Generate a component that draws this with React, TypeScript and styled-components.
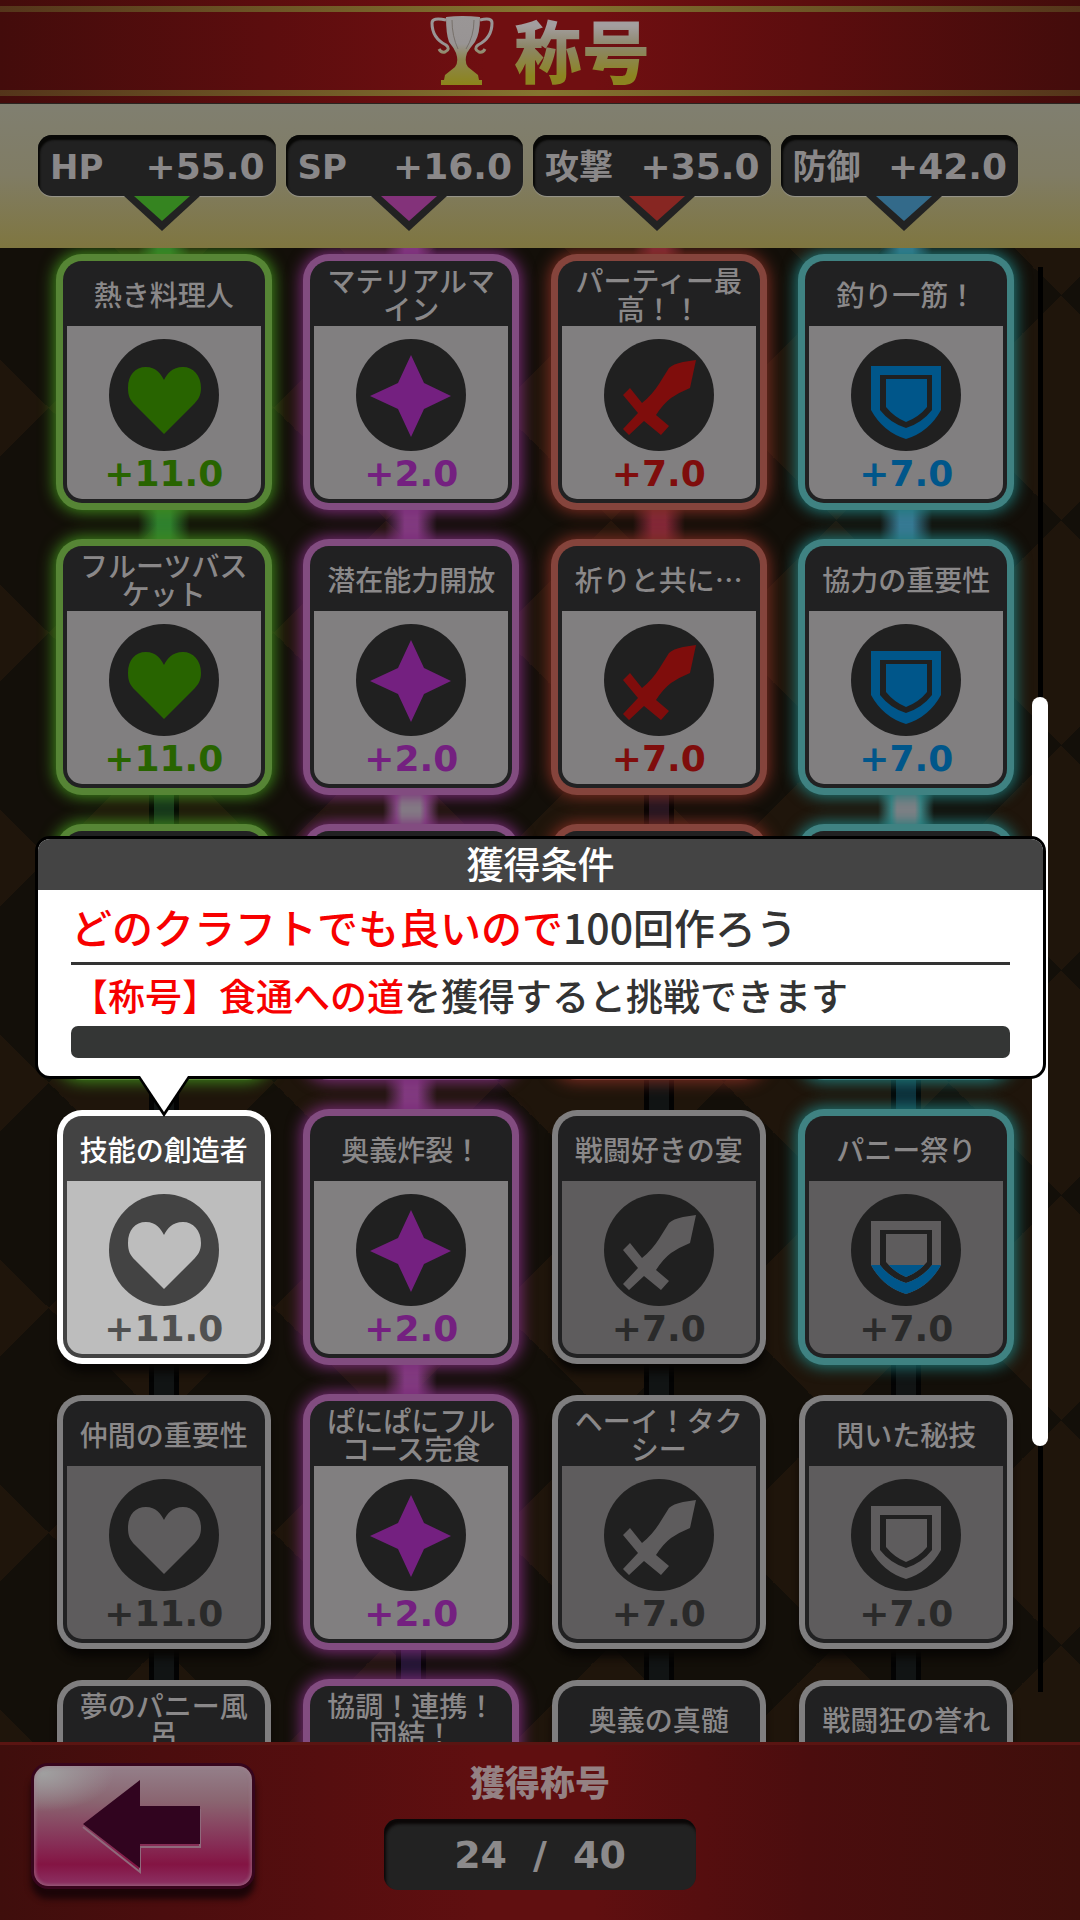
import React from "react";
import styled, { createGlobalStyle, css } from "styled-components";

type Stat = "hp" | "sp" | "attack" | "defense";
type LinkState = "lit" | "white" | "tinted" | "off";
type CardState = "open" | "progress" | "locked" | "selected";

const palette: Record<Stat, { ring: string; glow: string; icon: string; arrow: string; link: string; tint: string }> = {
  hp: { ring: "#568535", glow: "#3f8a1c", icon: "#286400", arrow: "#358420", link: "#2f8030", tint: "#15321c" },
  sp: { ring: "#824c80", glow: "#7c2c7a", icon: "#742080", arrow: "#83327a", link: "#823c80", tint: "#1f1530" },
  attack: { ring: "#85443c", glow: "#7c2c22", icon: "#7f0d0c", arrow: "#872622", link: "#84283a", tint: "#231622" },
  defense: { ring: "#3f8282", glow: "#1f7a7a", icon: "#00568a", arrow: "#336a8a", link: "#3a7a96", tint: "#0d2d38" },
};

interface TitleCard {
  name: string;
  state: CardState;
  link: LinkState;
}

interface StatColumn {
  stat: Stat;
  label: string;
  total: string;
  bonus: string;
  cards: TitleCard[];
}

const columns: StatColumn[] = [
  {
    stat: "hp",
    label: "HP",
    total: "+55.0",
    bonus: "+11.0",
    cards: [
      { name: "熱き料理人", state: "open", link: "lit" },
      { name: "フルーツバスケット", state: "open", link: "tinted" },
      { name: "", state: "open", link: "off" },
      { name: "技能の創造者", state: "selected", link: "off" },
      { name: "仲間の重要性", state: "locked", link: "off" },
      { name: "夢のパニー風呂", state: "locked", link: "off" },
    ],
  },
  {
    stat: "sp",
    label: "SP",
    total: "+16.0",
    bonus: "+2.0",
    cards: [
      { name: "マテリアルマイン", state: "open", link: "lit" },
      { name: "潜在能力開放", state: "open", link: "white" },
      { name: "", state: "open", link: "lit" },
      { name: "奥義炸裂！", state: "open", link: "lit" },
      { name: "ぱにぱにフルコース完食", state: "open", link: "tinted" },
      { name: "協調！連携！団結！", state: "open", link: "off" },
    ],
  },
  {
    stat: "attack",
    label: "攻撃",
    total: "+35.0",
    bonus: "+7.0",
    cards: [
      { name: "パーティー最高！！", state: "open", link: "lit" },
      { name: "祈りと共に…", state: "open", link: "tinted" },
      { name: "", state: "open", link: "off" },
      { name: "戦闘好きの宴", state: "locked", link: "off" },
      { name: "ヘーイ！タクシー", state: "locked", link: "off" },
      { name: "奥義の真髄", state: "locked", link: "off" },
    ],
  },
  {
    stat: "defense",
    label: "防御",
    total: "+42.0",
    bonus: "+7.0",
    cards: [
      { name: "釣り一筋！", state: "open", link: "lit" },
      { name: "協力の重要性", state: "open", link: "white" },
      { name: "", state: "open", link: "tinted" },
      { name: "パニー祭り", state: "progress", link: "off" },
      { name: "閃いた秘技", state: "locked", link: "off" },
      { name: "戦闘狂の誉れ", state: "locked", link: "off" },
    ],
  },
];

const Global = createGlobalStyle`
  * { box-sizing: border-box; }
  body { margin: 0; background: #120e08; }
  button { border: 0; padding: 0; background: none; font: inherit; color: inherit; cursor: pointer; }
  h1, h2, p { margin: 0; }
`;

const numberFont = css`
  font-family: "DejaVu Sans", "Noto Sans CJK JP", sans-serif;
  font-weight: 700;
`;

const Screen = styled.div`
  display: flex;
  flex-direction: column;
  height: 100vh;
  overflow: hidden;
  font-family: "Noto Sans CJK JP", sans-serif;
`;

const Header = styled.header`
  flex: none;
  padding: 6px 0 7px;
  border-bottom: 1px solid #2a2420;
  background: linear-gradient(90deg, #430c0b, #5c0d0e 25%, #700f11 45%, #700f11 55%, #5c0d0e 75%, #430c0b);
`;

const HeaderBand = styled.div`
  display: flex;
  align-items: center;
  justify-content: center;
  gap: 20px;
  height: 90px;
  border: solid;
  border-width: 6px 0;
  border-image: linear-gradient(90deg, #54341a, #857430 50%, #54341a) 6;
`;

const ScreenTitle = styled.h1`
  font-size: 68px;
  line-height: 80px;
  padding-bottom: 4px;
  font-weight: 900;
  color: transparent;
  background: linear-gradient(#a39e9f 20%, #8c8668 45%, #8c8420 80%);
  background-clip: text;
  -webkit-background-clip: text;
`;

const Totals = styled.section`
  flex: none;
  display: grid;
  grid-template-columns: repeat(4, 1fr);
  height: 144px;
  padding: 31px 57px 0 33px;
  background: linear-gradient(#807f70, #807c64 50%, #7f7640);
`;

const TotalCell = styled.div`
  display: flex;
  flex-direction: column;
  align-items: center;
  padding: 0 5px;
`;

const TotalPill = styled.div`
  display: flex;
  align-items: center;
  justify-content: space-between;
  width: 100%;
  height: 61px;
  padding: 2px 11px 0 12px;
  border-radius: 14px;
  background: #212121;
  box-shadow: inset 2px 5px 2px #080806, 0 1px 1px #98968c;
  color: #8a8889;
  font-size: 34px;
  line-height: 40px;
  ${numberFont}
`;

const TotalValue = styled.span`
  font-size: 36px;
`;

const PillArrow = styled.svg`
  display: block;
  margin-left: 10px;
`;

const ListArea = styled.main`
  position: relative;
  flex: 1;
  min-height: 0;
  display: flex;
  gap: 2px;
  padding: 0 32px 0 40px;
  overflow: hidden;
  background: conic-gradient(from 45deg, #1f150b 90deg, #130f09 0 180deg, #1f150b 0 270deg, #130f09 0) -64px 47px / 225px 225px;
`;

const CardGrid = styled.div`
  flex: 1;
  display: grid;
  grid-template-columns: repeat(4, 1fr);
  align-items: start;
`;

const CardColumn = styled.div`
  display: flex;
  flex-direction: column;
  align-items: center;
`;

const Link = styled.div<{ $stat: Stat; $state: LinkState; $short?: boolean }>`
  flex: none;
  width: 30px;
  height: ${(p) => (p.$short ? 13 : 43)}px;
  border: solid #030303;
  border-width: 0 5px;
  background: #111414;
  ${(p) =>
    p.$state === "tinted" &&
    css`
      background: ${palette[p.$stat].tint};
    `}
  ${(p) =>
    p.$state === "lit" &&
    css`
      width: 52px;
      border: 0;
      background: linear-gradient(
        90deg,
        transparent,
        ${palette[p.$stat].link} 38%,
        ${palette[p.$stat].link} 62%,
        transparent
      );
    `}
  ${(p) =>
    p.$state === "white" &&
    css`
      width: 56px;
      border: 0;
      background: linear-gradient(
        90deg,
        transparent,
        ${palette[p.$stat].ring} 24%,
        #858186 34%,
        #858186 66%,
        ${palette[p.$stat].ring} 76%,
        transparent
      );
    `}
`;

const ringStyles = {
  open: css<{ $stat: Stat }>`
    box-shadow: 0 0 0 7px ${(p) => palette[p.$stat].ring}, 0 0 15px 9px ${(p) => palette[p.$stat].glow};
  `,
  locked: css`
    box-shadow: 0 0 0 6px #7f7e7f, 0 10px 8px 4px #080604;
  `,
  selected: css`
    box-shadow: 0 0 0 6px #fff, 0 10px 8px 4px #080604;
  `,
};

const Card = styled.button<{ $stat: Stat; $state: CardState }>`
  position: relative;
  flex: none;
  display: flex;
  flex-direction: column;
  width: 202px;
  height: 242px;
  padding: 0 4px 4px;
  border-radius: 19px;
  background: ${(p) => (p.$state === "selected" ? "#434343" : "#212122")};
  ${(p) => (p.$state === "progress" ? ringStyles.open : ringStyles[p.$state])}
`;

const CardName = styled.span<{ $selected: boolean }>`
  display: flex;
  align-items: center;
  justify-content: center;
  height: 65px;
  padding: 0 8px;
  color: ${(p) => (p.$selected ? "#fff" : "#8a8889")};
  font-size: 28px;
  line-height: 28px;
  font-weight: 500;
  text-align: center;
`;

const CardBody = styled.span<{ $state: CardState }>`
  display: flex;
  flex: 1;
  flex-direction: column;
  align-items: center;
  padding-top: 12px;
  border-radius: 0 0 15px 15px;
  background: ${(p) => (p.$state === "open" ? "#817f80" : p.$state === "selected" ? "#bdbdbd" : "#5e5c5d")};
`;

const Bonus = styled.span<{ $color: string }>`
  color: ${(p) => p.$color};
  font-size: 36px;
  line-height: 44px;
  ${numberFont}
`;

const Rail = styled.div`
  flex: none;
  width: 16px;
  height: calc(100% - 69px);
  margin-top: 19px;
  background: linear-gradient(#000, #000) center / 5px 100% no-repeat;
  display: flex;
  flex-direction: column;
`;

const RailGap = styled.div`
  flex: 430;
`;

const RailThumb = styled.div`
  flex: 749;
  border-radius: 8px;
  background: #fff;
`;

const RailRest = styled.div`
  flex: 246;
`;

const Popup = styled.section`
  position: absolute;
  top: 588px;
  left: 35px;
  right: 34px;
  border: 3px solid #000;
  border-radius: 15px;
  background: #fff;
  color: #333;
`;

const PopupTitle = styled.h2`
  height: 51px;
  border-radius: 12px 12px 0 0;
  background: #444;
  color: #fff;
  font-size: 37px;
  line-height: 48px;
  font-weight: 500;
  text-align: center;
`;

const PopupBody = styled.div`
  padding: 0 33px 18px;
`;

const Condition = styled.p`
  font-size: 41px;
  line-height: 72px;
  font-weight: 500;
  white-space: nowrap;
  border-bottom: 3px solid #333;
`;

const Requirement = styled.p`
  font-size: 37px;
  line-height: 61px;
  font-weight: 500;
  white-space: nowrap;
`;

const Accent = styled.span`
  color: #f70000;
`;

const ProgressTrack = styled.div`
  height: 32px;
  border-radius: 7px;
  background: #343635;
`;

const PopupTail = styled.svg`
  position: absolute;
  top: 100%;
  left: 99px;
`;

const Footer = styled.footer`
  flex: none;
  display: grid;
  grid-template-columns: 1fr 312px 1fr;
  height: 178px;
  padding: 0 34px;
  border-top: 3px solid #5a1512;
  background: linear-gradient(90deg, #3f0e0c, #4b0d0e 15%, #600f10 45%, #600f10 55%, #4b0d0e 75%, #3f0f0b);
`;

const BackButton = styled.button`
  width: 218px;
  height: 120px;
  margin-top: 21px;
  border-radius: 14px;
  background:
    radial-gradient(ellipse at 4% 6%, #a0a0a0, transparent 24%),
    linear-gradient(#94808a, #8a6470 30%, #862e56 65%, #841443 82%, #8a2c5e 96%);
  box-shadow: inset 0 0 3px 2px #a0809080, 0 0 0 3px #37051d, 0 10px 6px 3px #1c0508;
`;

const CountPanel = styled.div`
  display: flex;
  flex-direction: column;
  align-items: center;
`;

const CountLabel = styled.h2`
  margin-top: 10px;
  color: #948183;
  font-size: 35px;
  line-height: 52px;
  font-weight: 900;
`;

const CountBox = styled.div`
  display: flex;
  align-items: center;
  justify-content: center;
  gap: 26px;
  width: 100%;
  height: 71px;
  margin-top: 12px;
  border-radius: 14px;
  background: #222;
  box-shadow: inset 2px 5px 3px #0b0707;
  color: #8c8a8b;
  font-size: 38px;
  ${numberFont}
`;

const shapes: Record<Stat, React.ReactNode> = {
  hp: <path d="M56 42C53 36 48 29 38 29C27 29 20 37 20 50C20 58 22 62 27 67L56 96L85 67C90 62 93 58 93 50C93 37 85 29 75 29C64 29 59 36 56 42Z" />,
  sp: <path d="M56 17L69 45L96 58L69 71L56 99L43 71L15 58L43 45Z" />,
  attack: <path d="M93 22L80 24Q70 26 66 30L56 46Q49 57 39 65L27 50L20 57L35 75L20 91L26 97L41 83L58 97L66 88L53 77Q60 66 68 60Q77 54 87 50Z" />,
  defense: (
    <path
      fillRule="evenodd"
      d="M21 28H91V72Q79 94 56 101Q33 94 21 72ZM30 37V72Q40 85 56 90Q72 85 82 72V37ZM36 41H77V69Q69 79 56 84Q44 79 36 69Z"
    />
  ),
};

function Emblem({ stat, state }: { stat: Stat; state: CardState }) {
  const disc = state === "selected" ? "#434343" : "#202020";
  const muted = state === "selected" ? "#bdbdbd" : "#5e5c5d";
  const tone = palette[stat].icon;
  return (
    <svg width="112" height="114" viewBox="0 0 112 114" aria-hidden="true">
      <ellipse cx="56" cy="57" rx="55" ry="56" fill={disc} />
      <g fill={state === "open" ? tone : muted}>{shapes[stat]}</g>
      {state === "progress" && (
        <svg x="0" y="72" width="112" height="42" viewBox="0 72 112 42" fill={tone}>
          {shapes[stat]}
        </svg>
      )}
    </svg>
  );
}

function Trophy() {
  return (
    <svg width="64" height="70" viewBox="0 0 64 70" aria-hidden="true">
      <defs>
        <linearGradient id="cup" gradientUnits="userSpaceOnUse" x1="0" y1="0" x2="0" y2="70">
          <stop offset="0" stopColor="#9a9696" />
          <stop offset="0.4" stopColor="#989494" />
          <stop offset="0.62" stopColor="#8c8650" />
          <stop offset="1" stopColor="#8c8418" />
        </linearGradient>
      </defs>
      <path
        fill="url(#cup)"
        d="M16 1Q32 -1 50 1Q50 18 45 26Q40 32 37 37Q34 46 38 51Q43 55 48 59L49 64H52V69H11V64H14L15 59Q20 55 25 51Q29 46 26 37Q24 32 19 26Q16 18 16 1Z"
      />
      <path
        fill="none"
        stroke="url(#cup)"
        strokeWidth="3"
        d="M16 4Q2 1 2 7Q2 22 16 29Q21 33 15 36Q11 37 9 33M50 4Q62 1 62 7Q62 22 48 29Q43 33 49 36Q53 37 55 33"
      />
      <path stroke="#77706a" strokeWidth="1" fill="none" d="M22 4Q22 20 28 33M44 4Q44 20 36 33" />
    </svg>
  );
}

function bonusColor(stat: Stat, state: CardState) {
  if (state === "open") return palette[stat].icon;
  return state === "selected" ? "#505050" : "#2a2a2a";
}

export default function App() {
  return (
    <Screen>
      <Global />
      <Header>
        <HeaderBand>
          <Trophy />
          <ScreenTitle>称号</ScreenTitle>
        </HeaderBand>
      </Header>

      <Totals>
        {columns.map((column) => (
          <TotalCell key={column.stat}>
            <TotalPill>
              <span>{column.label}</span>
              <TotalValue>{column.total}</TotalValue>
            </TotalPill>
            <PillArrow width="76" height="35" viewBox="0 0 76 35" aria-hidden="true">
              <path d="M0 0H76L38 35Z" fill="#222" />
              <path d="M10 0H66L38 25Z" fill={palette[column.stat].arrow} />
            </PillArrow>
          </TotalCell>
        ))}
      </Totals>

      <ListArea>
        <CardGrid>
          {columns.map((column) => (
            <CardColumn key={column.stat}>
              <Link $stat={column.stat} $state="lit" $short />
              {column.cards.map((card, row) => (
                <React.Fragment key={row}>
                  <Card type="button" $stat={column.stat} $state={card.state}>
                    <CardName $selected={card.state === "selected"}>{card.name}</CardName>
                    <CardBody $state={card.state}>
                      <Emblem stat={column.stat} state={card.state} />
                      <Bonus $color={bonusColor(column.stat, card.state)}>{column.bonus}</Bonus>
                    </CardBody>
                  </Card>
                  <Link $stat={column.stat} $state={card.link} />
                </React.Fragment>
              ))}
            </CardColumn>
          ))}
        </CardGrid>

        <Rail>
          <RailGap />
          <RailThumb />
          <RailRest />
        </Rail>

        <Popup>
          <PopupTitle>獲得条件</PopupTitle>
          <PopupBody>
            <Condition>
              <Accent>どのクラフトでも良いので</Accent>100回作ろう
            </Condition>
            <Requirement>
              <Accent>【称号】食通への道</Accent>を獲得すると挑戦できます
            </Requirement>
            <ProgressTrack role="progressbar" aria-valuenow={0} aria-valuemin={0} aria-valuemax={100} />
          </PopupBody>
          <PopupTail width="54" height="42" viewBox="0 0 54 42" aria-hidden="true">
            <path d="M0 0L27 41L54 0Z" fill="#000" />
            <path d="M3 0L27 36L51 0Z" fill="#fff" />
          </PopupTail>
        </Popup>
      </ListArea>

      <Footer>
        <BackButton type="button" aria-label="戻る">
          <svg width="218" height="120" viewBox="0 0 218 120" aria-hidden="true">
            <path d="M49 61L106 106V81H166V43" fill="none" stroke="#8f6a7c" strokeWidth="2" />
            <path d="M49 58L106 14V40H166V78H106V102Z" fill="#31041f" />
          </svg>
        </BackButton>
        <CountPanel>
          <CountLabel>獲得称号</CountLabel>
          <CountBox>
            <span>24</span>
            <span>/</span>
            <span>40</span>
          </CountBox>
        </CountPanel>
      </Footer>
    </Screen>
  );
}
